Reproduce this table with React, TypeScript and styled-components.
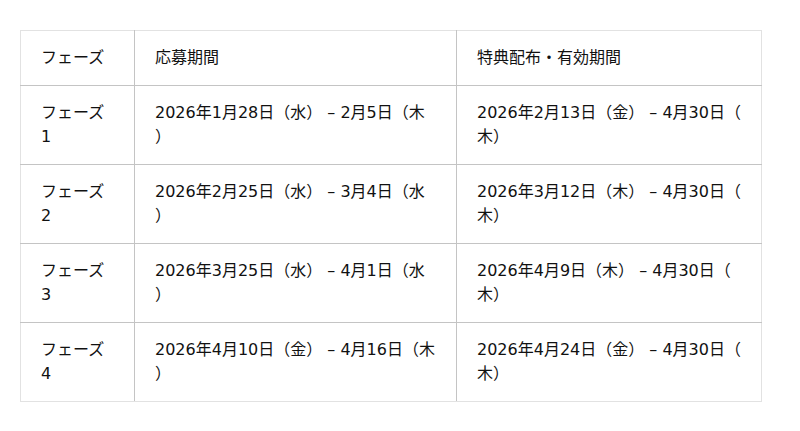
import styled, { createGlobalStyle } from 'styled-components';

const GlobalStyle = createGlobalStyle`
  body {
    margin: 0;
    background: #fff;
    font-family: 'DejaVu Sans', 'Noto Sans CJK JP', sans-serif;
    color: #111;
  }
`;

interface IPhase {
  name: string;
  apply: string;
  benefit: string;
}

const phases: IPhase[] = [
  {
    name: 'フェーズ1',
    apply: '2026年1月28日（水） – 2月5日（木）',
    benefit: '2026年2月13日（金） – 4月30日（木）',
  },
  {
    name: 'フェーズ2',
    apply: '2026年2月25日（水） – 3月4日（水）',
    benefit: '2026年3月12日（木） – 4月30日（木）',
  },
  {
    name: 'フェーズ3',
    apply: '2026年3月25日（水） – 4月1日（水）',
    benefit: '2026年4月9日（木） – 4月30日（木）',
  },
  {
    name: 'フェーズ4',
    apply: '2026年4月10日（金） – 4月16日（木）',
    benefit: '2026年4月24日（金） – 4月30日（木）',
  },
];

const App = () => {
  return (
    <>
      <GlobalStyle />
      <Page>
        <Table>
          <colgroup>
            <col style={{ width: 114 }} />
            <col style={{ width: 322 }} />
            <col style={{ width: 305 }} />
          </colgroup>
          <thead>
            <HeadRow>
              <Cell as='th'>フェーズ</Cell>
              <Cell as='th'>応募期間</Cell>
              <Cell as='th'>特典配布・有効期間</Cell>
            </HeadRow>
          </thead>
          <tbody>
            {phases.map((p) => (
              <Row key={p.name}>
                <Cell>{p.name}</Cell>
                <Cell>{p.apply}</Cell>
                <Cell>{p.benefit}</Cell>
              </Row>
            ))}
          </tbody>
        </Table>
      </Page>
    </>
  );
};

const Page = styled.div`
  padding: 30px 20px;
`;

const Table = styled.table`
  width: 741px;
  table-layout: fixed;
  border-collapse: collapse;
  font-size: 16px;
  line-height: 24px;
`;

const HeadRow = styled.tr`
  height: 54px;
  th {
    font-weight: normal;
    text-align: left;
    border-top-color: #e2e2e2;
  }
`;

const Row = styled.tr`
  height: 79px;
  &:last-child td {
    border-bottom-color: #e2e2e2;
  }
`;

const Cell = styled.td`
  padding: 15px 20px;
  vertical-align: top;
  border: 1px solid #c4c4c4;
  line-break: anywhere;
  text-spacing-trim: space-all;
  &:first-child {
    border-left-color: #e2e2e2;
  }
  &:last-child {
    border-right-color: #e2e2e2;
  }
`;

export default App;
